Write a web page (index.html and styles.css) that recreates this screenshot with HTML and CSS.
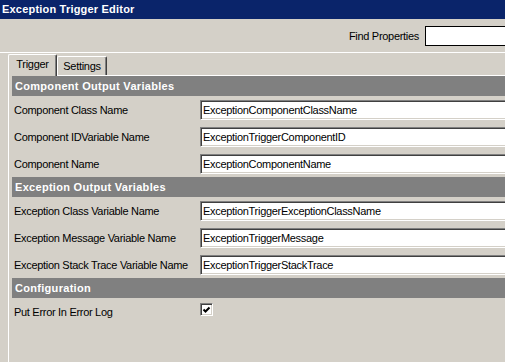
FILE: index.html
```html
<!DOCTYPE html>
<html lang="en">
<head>
    <meta charset="UTF-8">
    <title>Exception Trigger Editor</title>
    <link rel="stylesheet" href="styles.css">
</head>
<body>
    <div class="titlebar">Exception Trigger Editor</div>

    <div class="findbar">
        <label for="find">Find Properties</label>
        <input type="text" id="find" class="find-input">
    </div>

    <div class="tabs">
        <div class="tab active">Trigger</div>
        <div class="tab">Settings</div>
    </div>

    <div class="panel">
        <div class="section">Component Output Variables</div>
        <div class="row">
            <span class="label">Component Class Name</span>
            <input type="text" class="field" value="ExceptionComponentClassName">
        </div>
        <div class="row">
            <span class="label">Component IDVariable Name</span>
            <input type="text" class="field" value="ExceptionTriggerComponentID">
        </div>
        <div class="row">
            <span class="label">Component Name</span>
            <input type="text" class="field" value="ExceptionComponentName">
        </div>

        <div class="section">Exception Output Variables</div>
        <div class="row">
            <span class="label">Exception Class Variable Name</span>
            <input type="text" class="field" value="ExceptionTriggerExceptionClassName">
        </div>
        <div class="row">
            <span class="label">Exception Message Variable Name</span>
            <input type="text" class="field" value="ExceptionTriggerMessage">
        </div>
        <div class="row">
            <span class="label">Exception Stack Trace Variable Name</span>
            <input type="text" class="field" value="ExceptionTriggerStackTrace">
        </div>

        <div class="section">Configuration</div>
        <div class="row">
            <span class="label">Put Error In Error Log</span>
            <span class="checkbox">
                <svg width="9" height="9" viewBox="0 0 9 9">
                    <polyline points="1.5,3.5 3.5,5.5 7.5,1.5" fill="none" stroke="#000" stroke-width="2"/>
                </svg>
            </span>
        </div>
    </div>
</body>
</html>
```

FILE: styles.css
```css
html, body{
    margin: 0;
    padding: 0;
    overflow: hidden;
}
body{
    width: 505px;
    height: 362px;
    background-color: #d4d0c8;
    font-family: "Liberation Sans", Arial, sans-serif;
    font-size: 11px;
    letter-spacing: -0.3px;
    color: #000;
}
.titlebar{
    height: 19px;
    line-height: 19px;
    padding-left: 2px;
    background-color: #0a246a;
    color: #fff;
    font-weight: bold;
    letter-spacing: 0.2px;
}
.findbar{
    display: flex;
    justify-content: flex-end;
    align-items: center;
    gap: 6px;
    height: 34px;
    box-sizing: border-box;
    border-bottom: 1px solid #fff;
}
.find-input{
    width: 80px;
    height: 20px;
    box-sizing: border-box;
    border: 1px solid #000;
    border-right: none;
    background: #fff;
    font: inherit;
    padding: 0 2px;
    outline: none;
}
.tabs{
    display: flex;
    align-items: flex-end;
    height: 22px;
    margin-left: 8px;
}
.tab{
    box-sizing: border-box;
    width: 50px;
    height: 19px;
    line-height: 18px;
    text-align: center;
    border-top: 1px solid #fff;
    border-left: 1px solid #fff;
    border-right: 1px solid #404040;
    box-shadow: inset -1px 0 0 #808080;
    border-top-left-radius: 2px;
    border-top-right-radius: 2px;
}
.tab.active{
    width: 49px;
    height: 22px;
    line-height: 19px;
    margin-bottom: -1px;
    position: relative;
    z-index: 1;
    background-color: #d4d0c8;
}
.panel{
    margin-left: 8px;
    height: 287px;
    box-sizing: border-box;
    border-top: 1px solid #fff;
    border-left: 1px solid #fff;
    padding-left: 3px;
}
.section{
    height: 20px;
    line-height: 20px;
    padding-left: 3px;
    background-color: #808080;
    color: #fff;
    font-weight: bold;
    letter-spacing: 0.3px;
}
.row{
    display: grid;
    grid-template-columns: 188px 1fr;
    align-items: center;
    height: 27px;
}
.label{
    padding-left: 2px;
    padding-top: 1px;
    white-space: nowrap;
}
.field{
    width: 100%;
    min-width: 0;
    height: 20px;
    box-sizing: border-box;
    border-style: solid;
    border-width: 1px 0 1px 1px;
    border-color: #808080 #fff #fff #808080;
    box-shadow: inset 1px 1px 0 #404040, inset 0 -1px 0 #d4d0c8;
    background: #fff;
    font: inherit;
    letter-spacing: -0.3px;
    padding: 0 0 0 2px;
    outline: none;
    color: #000;
}
.checkbox{
    width: 13px;
    height: 13px;
    box-sizing: border-box;
    border-style: solid;
    border-width: 1px;
    border-color: #808080 #fff #fff #808080;
    box-shadow: inset 1px 1px 0 #404040, inset -1px -1px 0 #d4d0c8;
    background: #fff;
    display: flex;
    align-items: center;
    justify-content: center;
    margin-top: -4px;
}
.checkbox svg{
    display: block;
    margin: 1px 0 0 0;
}
```
